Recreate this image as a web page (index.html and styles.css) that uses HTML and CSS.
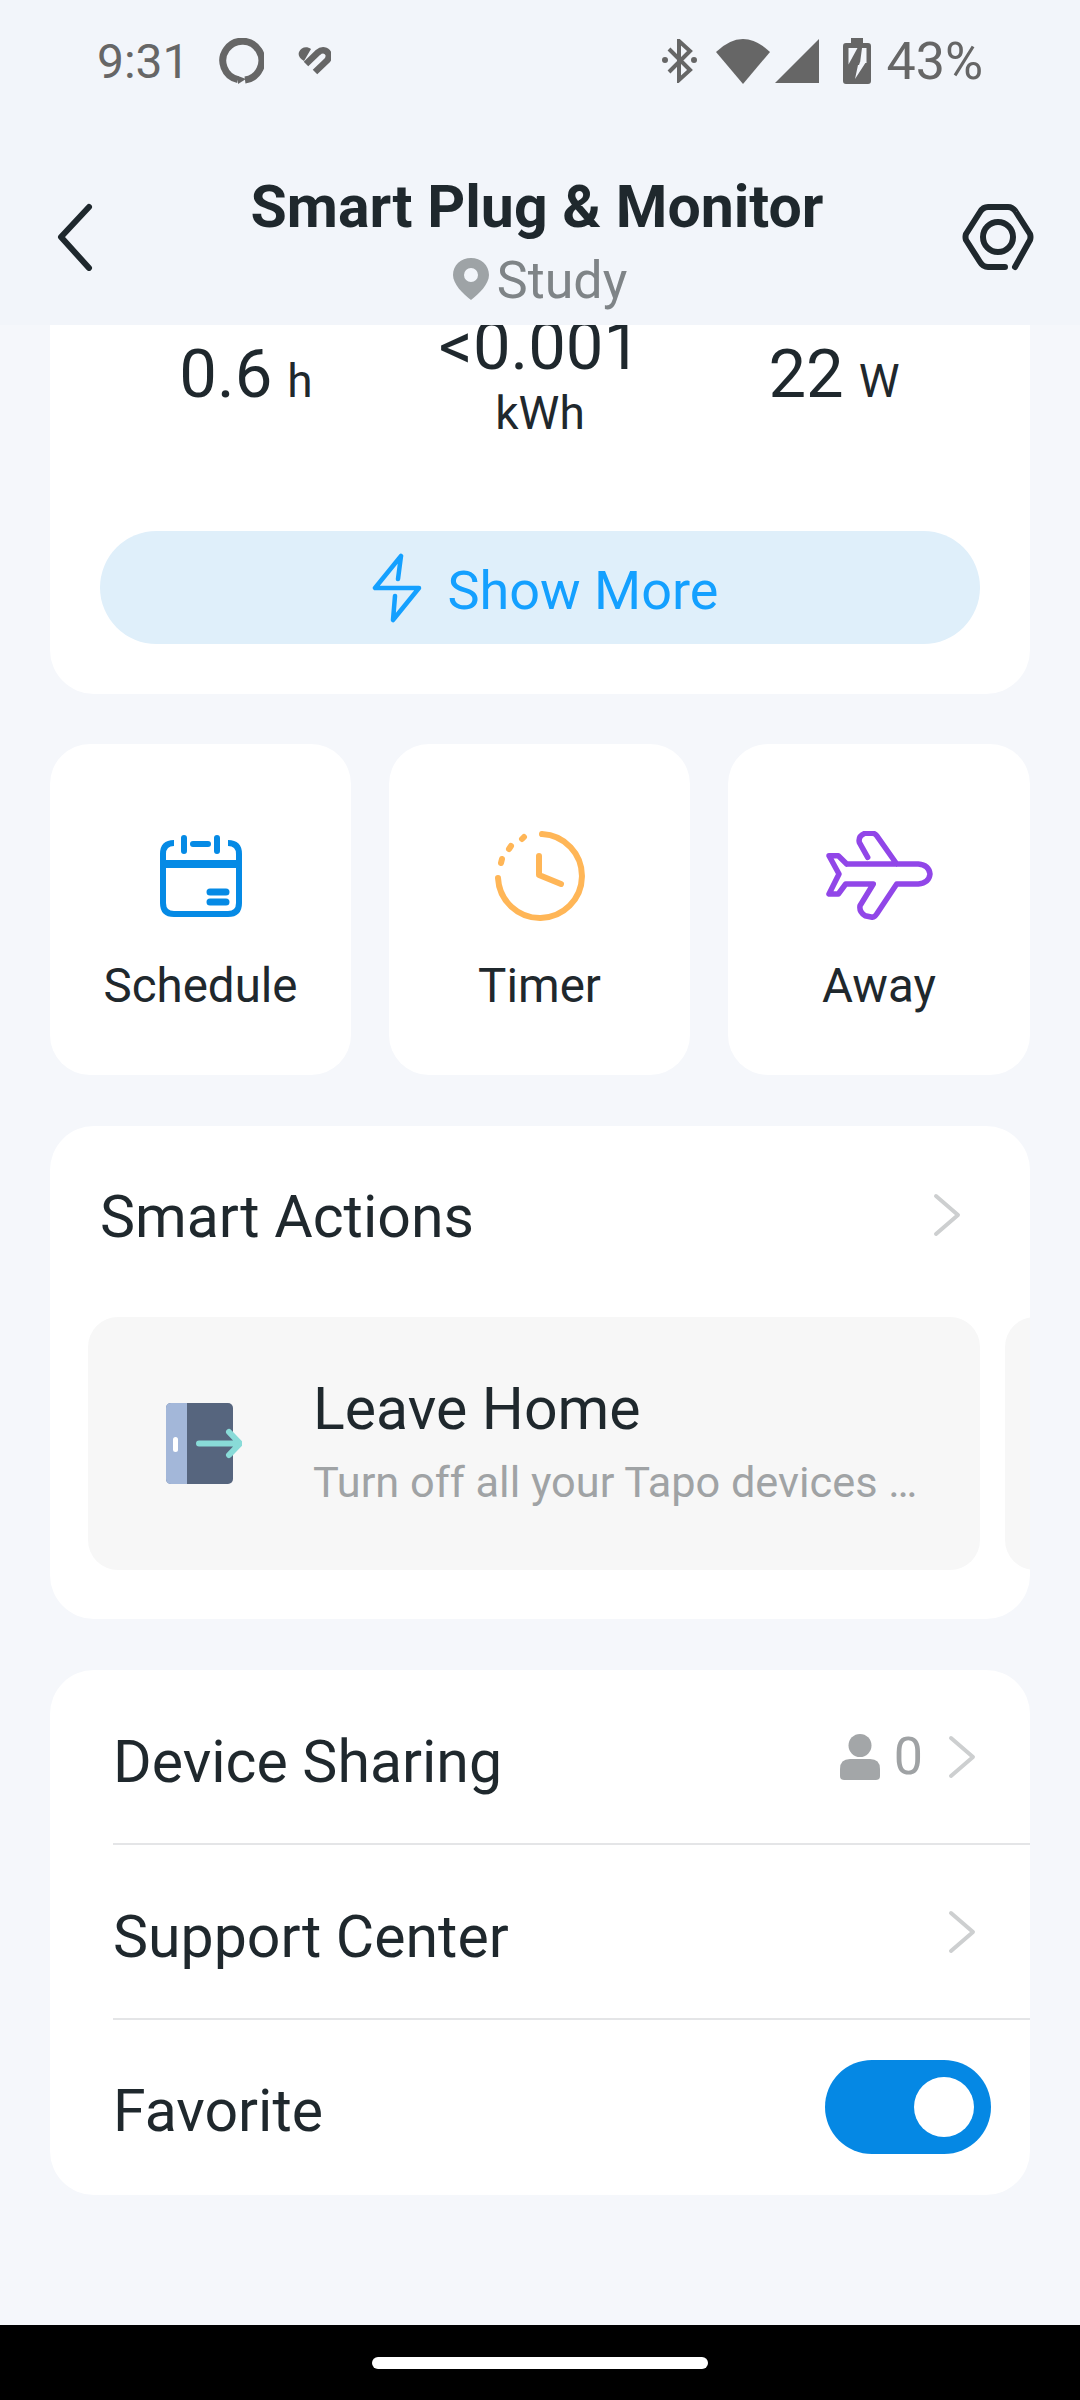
FILE: index.html
```html
<!DOCTYPE html>
<html lang="en">
<head>
    <meta charset="UTF-8">
    <meta name="viewport" content="width=device-width, initial-scale=1.0">
    <title>Smart Plug &amp; Monitor</title>
    <link rel="stylesheet" href="styles.css">
</head>
<body>

<div class="phone">
    <header class="top">
        <!-- Status bar -->
        <div class="status-bar">
            <div class="status-left">
                <span class="clock">9:31</span>
                <svg class="ic-ring" width="46" height="46" viewBox="0 0 46 46"><path d="M20 41.700A19.500 19.500 0 1 1 27 42" fill="none" stroke="#666" stroke-width="7"/><path d="M20 38L20 46L28 41Z" fill="#666"/></svg>
                <svg class="ic-heart" width="33" height="28" viewBox="0 0 33 28"><path d="M13 2C9 -1 3 0 1 5C0 8 1 11 6 14Z" fill="#666"/><path d="M8 17L20 5.500C24 2 29 3 30.500 7C31.500 10 30.500 12 28.500 14L17 25" fill="none" stroke="#666" stroke-width="6.500"/></svg>
            </div>
            <div class="status-right">
                <svg class="ic-bt" width="36" height="44" viewBox="0 0 36 44"><path d="M7 10L28 31L17 41V2L28 12L7 33" fill="none" stroke="#666" stroke-width="4"/><circle cx="3" cy="21" r="3" fill="#666"/><circle cx="32" cy="21" r="3" fill="#666"/></svg>
                <svg class="ic-wifi" width="54" height="45" viewBox="0 0 54 45"><path d="M27 45L0 13Q27 -13 54 13Z" fill="#666"/></svg>
                <svg class="ic-signal" width="44" height="44" viewBox="0 0 44 44"><path d="M0 44L44 0V44Z" fill="#666"/></svg>
                <svg class="ic-batt" width="28" height="46" viewBox="0 0 28 46"><path d="M8 0H20V5H25Q28 5 28 8V43Q28 46 25 46H3Q0 46 0 43V8Q0 5 3 5H8Z" fill="#666"/><path d="M5.500 10H14.500L5.500 26.500ZM19 10H23.500V25H17Z" fill="#f2f5fa"/><path d="M8 27H15L12 41L23 24H17L16 27Z" fill="#f2f5fa"/></svg>
                <span class="batt">43%</span>
            </div>
        </div>

        <!-- Title bar -->
        <div class="title-bar">
            <svg class="back" width="36" height="68" viewBox="0 0 36 68"><path d="M32 4L4 34L32 65" fill="none" stroke="#1f282d" stroke-width="6" stroke-linecap="round" stroke-linejoin="round"/></svg>
            <div class="title-wrap">
                <h1>Smart Plug &amp; Monitor</h1>
                <div class="room">
                    <svg width="36" height="42" viewBox="0 0 36 42"><path fill-rule="evenodd" d="M18 0C8 0 0 7 0 17C0 26 10 36 18 42C26 36 36 26 36 17C36 7 28 0 18 0ZM18 10A7 7 0 1 1 18 24A7 7 0 1 1 18 10Z" fill="#9ea3a6"/></svg>
                    <span>Study</span>
                </div>
            </div>
            <svg class="gear" width="76" height="68" viewBox="0 0 76 68"><path d="M45 64H28Q23 64 20 59L6 37Q5 34 6 31L20 9Q23 4 28 4H48Q53 4 56 9L70 31Q71 34 70 37L55 64" fill="none" stroke="#1f282d" stroke-width="6" stroke-linecap="round" stroke-linejoin="round"/><circle cx="38" cy="34" r="15" fill="none" stroke="#1f282d" stroke-width="6"/></svg>
        </div>
    </header>

    <main class="scroller">
        <!-- Energy card, scrolled up under the header -->
        <section class="card energy">
            <div class="stats">
                <div class="stat stat-side"><span class="val">0.6</span><span class="unit">h</span></div>
                <div class="stat">
                    <div class="val">&lt;0.001</div>
                    <div class="unit-line">kWh</div>
                </div>
                <div class="stat stat-side"><span class="val">22</span><span class="unit">W</span></div>
            </div>
            <div class="show-more">
                <svg width="50" height="70" viewBox="0 0 50 70"><path d="M29 3L3 35H47L21 67L23 43M29 3L26 26" fill="none" stroke="#14a0ff" stroke-width="4.500" stroke-linecap="round" stroke-linejoin="round"/></svg>
                <span>Show More</span>
            </div>
        </section>

        <!-- Quick actions -->
        <section class="tiles">
            <div class="tile">
                <svg width="82" height="90" viewBox="0 0 82 82"><path d="M14 8Q3 8 3 19V68Q3 79 14 79H68Q79 79 79 68V19Q79 8 68 8" fill="none" stroke="#058ae5" stroke-width="6"/><path d="M3 29H79" stroke="#058ae5" stroke-width="8"/><path d="M24 3V16M57 3V16M33 9H48" fill="none" stroke="#058ae5" stroke-width="6" stroke-linecap="round"/><path d="M50 57H66M50 67H66" fill="none" stroke="#058ae5" stroke-width="7" stroke-linecap="round"/></svg>
                <span>Schedule</span>
            </div>
            <div class="tile">
                <svg width="90" height="90" viewBox="0 0 90 90"><path d="M47 3A42 42 0 1 1 3 47" fill="none" stroke="#ffb657" stroke-width="6" stroke-linecap="round"/><path d="M27 8L29 6M14 18L16 15M6 32L7 28" fill="none" stroke="#ffb657" stroke-width="6" stroke-linecap="round"/><path d="M44 25V44L66 53" fill="none" stroke="#ffb657" stroke-width="6" stroke-linecap="round" stroke-linejoin="round"/></svg>
                <span>Timer</span>
            </div>
            <div class="tile">
                <svg width="107" height="90" viewBox="0 0 107 90"><path d="M41.700 26.300L33.300 11.300Q32 5 39 2.300H46.300Q49 2.300 50.700 4.700L70.700 33M20.700 33L12.300 24.700H3L13 43L3 63H12.300L19.700 53H47.300L34 74.700Q33 81 39 84.700L46.300 86.300Q49 86 50.700 83L70.700 53H92.300Q103 52 104 43Q103 34 92.300 33H20.700" fill="none" stroke="#9146e8" stroke-width="5.500" stroke-linecap="round" stroke-linejoin="round"/></svg>
                <span>Away</span>
            </div>
        </section>

        <!-- Smart actions -->
        <section class="card smart">
            <div class="smart-head">
                <span>Smart Actions</span>
                <svg class="chev" width="28" height="44" viewBox="0 0 28 44"><path d="M3 3L25 22L3 41" fill="none" stroke="#cdcfd0" stroke-width="4" stroke-linecap="round" stroke-linejoin="round"/></svg>
            </div>
            <div class="smart-list">
                <div class="action">
                    <svg width="76" height="81" viewBox="0 0 76 81"><rect width="67" height="81" rx="5" fill="#56657e"/><path d="M21 0H5Q0 0 0 5V76Q0 81 5 81H21Z" fill="#a3b7d9"/><rect x="7" y="34" width="5" height="15" rx="2.500" fill="#fff"/><path d="M33 40.500H72M63 29L74 40.500L63 52" fill="none" stroke="#89dbd8" stroke-width="6" stroke-linecap="round" stroke-linejoin="round"/></svg>
                    <div class="action-text">
                        <div class="action-title">Leave Home</div>
                        <div class="action-sub">Turn off all your Tapo devices …</div>
                    </div>
                </div>
                <div class="action"></div>
            </div>
        </section>

        <!-- Settings rows -->
        <section class="card rows">
            <div class="row">
                <span class="row-label">Device Sharing</span>
                <div class="row-right">
                    <svg width="40" height="46" viewBox="0 0 40 46"><circle cx="20" cy="11.500" r="11.500" fill="#a3a6a8"/><path d="M10 25H30Q40 25 40 35V42Q40 46 36 46H4Q0 46 0 42V35Q0 25 10 25Z" fill="#a3a6a8"/></svg>
                    <span class="count">0</span>
                    <svg width="28" height="44" viewBox="0 0 28 44"><path d="M3 3L25 22L3 41" fill="none" stroke="#cdcfd0" stroke-width="4" stroke-linecap="round" stroke-linejoin="round"/></svg>
                </div>
            </div>
            <div class="row">
                <span class="row-label">Support Center</span>
                <div class="row-right">
                    <svg width="28" height="44" viewBox="0 0 28 44"><path d="M3 3L25 22L3 41" fill="none" stroke="#cdcfd0" stroke-width="4" stroke-linecap="round" stroke-linejoin="round"/></svg>
                </div>
            </div>
            <div class="row row-last">
                <span class="row-label">Favorite</span>
                <div class="toggle"><div class="knob"></div></div>
            </div>
        </section>
    </main>

    <!-- Android nav bar -->
    <footer class="nav-bar"><div class="home-pill"></div></footer>
</div>

</body>
</html>
```

FILE: styles.css
```css
* {
    box-sizing: border-box;
}

body {
    margin: 0;
    font-family: Roboto, "Liberation Sans", sans-serif;
    background-color: #f5f7fb;
    color: #1f282d;
}

.phone {
    display: flex;
    flex-direction: column;
    width: 1080px;
    height: 2400px;
    overflow: hidden;
}

/* Header */
.top {
    height: 325px;
    flex: none;
    background-color: #f2f5fa;
}

.status-bar {
    display: flex;
    justify-content: space-between;
    align-items: center;
    height: 122px;
    padding: 0 97px;
    color: #666;
}

.status-left, .status-right {
    display: flex;
    align-items: center;
}

.clock {
    font-size: 48px;
}

.ic-ring {
    margin-left: 28px;
}

.ic-heart {
    margin-left: 34px;
}

.ic-wifi {
    margin-left: 18px;
}

.ic-signal {
    margin-left: 5px;
}

.ic-batt {
    margin-left: 24px;
}

.batt {
    margin-left: 15px;
    font-size: 52px;
}

.title-bar {
    display: grid;
    grid-template-columns: 1fr auto 1fr;
    align-items: start;
    padding: 0 44px;
}

.back {
    margin: 81px 0 0 13px;
}

.gear {
    margin-top: 81px;
    justify-self: end;
}

.title-wrap {
    text-align: center;
}

h1 {
    margin: 52px 6px 0 0;
    font-size: 59px;
    line-height: 66px;
    font-weight: 700;
}

.room {
    display: flex;
    justify-content: center;
    align-items: center;
    gap: 8px;
    margin-top: 11px;
    font-size: 52px;
    line-height: 60px;
    color: #7f8487;
}

.room svg {
    margin-top: -4px;
}

/* Scrolling content */
.scroller {
    flex: 1;
    overflow: hidden;
    padding: 0 50px;
    min-height: 0;
}

.card {
    background-color: #fff;
    border-radius: 44px;
    overflow: hidden;
}

.energy {
    margin-top: -60px;
    padding: 48px 0 50px;
}

.stats {
    display: grid;
    grid-template-columns: repeat(3, 294px);
    padding: 0 49px;
    margin-bottom: 83px;
    text-align: center;
}

.stat-side {
    padding-top: 28px;
}

.val {
    font-size: 67px;
    line-height: 66px;
}

.unit {
    margin-left: 15px;
    font-size: 46px;
}

.unit-line {
    font-size: 46px;
    line-height: 69px;
}

.show-more {
    display: flex;
    justify-content: center;
    align-items: center;
    gap: 26px;
    height: 113px;
    margin: 0 50px;
    padding-left: 10px;
    border-radius: 57px;
    background-color: #dfeffa;
    color: #14a0ff;
    font-size: 54px;
}

.show-more span {
    padding-top: 6px;
}

/* Schedule / Timer / Away */
.tiles {
    display: grid;
    grid-template-columns: 301px 301px 302px;
    gap: 38px;
    margin-top: 50px;
}

.tile {
    display: flex;
    flex-direction: column;
    align-items: center;
    height: 331px;
    padding-top: 87px;
    border-radius: 40px;
    background-color: #fff;
    font-size: 47.500px;
    line-height: 56px;
}

.tile svg {
    margin-bottom: 37px;
}

/* Smart actions */
.smart {
    margin-top: 51px;
    padding-bottom: 49px;
}

.smart-head {
    display: flex;
    justify-content: space-between;
    align-items: center;
    height: 191px;
    padding: 0 69px 10px 50px;
    font-size: 59px;
}

.chev {
    margin-top: -3px;
}

.smart-list {
    display: flex;
    gap: 25px;
    padding-left: 38px;
}

.action {
    display: flex;
    align-items: center;
    flex: none;
    width: 892px;
    height: 253px;
    padding-left: 78px;
    border-radius: 30px;
    background-color: #f7f7f7;
}

.action-text {
    margin-left: 71px;
    padding-bottom: 5px;
}

.action-title {
    font-size: 59px;
    line-height: 70px;
}

.action-sub {
    margin-top: 14px;
    font-size: 43.300px;
    line-height: 50px;
    color: #a0a3a5;
    white-space: nowrap;
}

/* Rows */
.rows {
    margin-top: 51px;
}

.row {
    display: flex;
    justify-content: space-between;
    align-items: center;
    height: 175px;
    margin-left: 63px;
    padding-right: 54px;
    border-bottom: 2px solid #e4e5e7;
    font-size: 59px;
}

.row-label {
    padding-top: 9px;
}

.row-last {
    height: 175px;
    padding-right: 39px;
    border-bottom: none;
}

.row-last .row-label {
    padding-top: 6px;
}

.row-right {
    display: flex;
    align-items: center;
}

.count {
    margin: 0 25px 0 14px;
    font-size: 52px;
    color: #9fa2a4;
}

.toggle {
    display: flex;
    justify-content: flex-end;
    align-items: center;
    width: 166px;
    height: 94px;
    margin-top: -2px;
    padding-right: 17px;
    border-radius: 47px;
    background-color: #0588e4;
}

.knob {
    width: 60px;
    height: 60px;
    border-radius: 50%;
    background-color: #fff;
}

/* Nav bar */
.nav-bar {
    display: flex;
    justify-content: center;
    align-items: center;
    flex: none;
    height: 75px;
    background-color: #000;
}

.home-pill {
    width: 336px;
    height: 12px;
    border-radius: 6px;
    background-color: #fff;
}
```
